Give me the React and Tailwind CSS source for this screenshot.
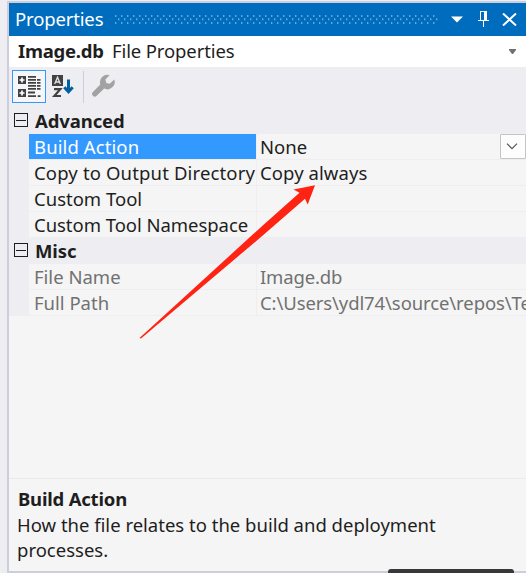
import React from "react";

function Expander() {
  return (
    <svg className="ml-[5px] mt-[5px] block" width="14" height="14" viewBox="0 0 14 14" shapeRendering="crispEdges">
      <path d="M.5.5h13v13H.5zM2 7.5h10" fill="none" stroke="#1e1e1e" />
    </svg>
  );
}

function Category({ name, className }) {
  return (
    <div className={`flex bg-[#eeeef2] ${className}`}>
      <div className="w-5 shrink-0"><Expander /></div>
      <div className="ml-[6px] text-[18.5px] leading-[26px] font-bold tracking-[-0.1px] text-[#1e1e1e]">{name}</div>
    </div>
  );
}

function Row({ name, value, selected, muted, track = "", valueTrack = "" }) {
  return (
    <div className={`flex h-[26px] bg-[#eeeef2] pl-5 leading-[26px] ${muted ? "text-[#717171]" : "text-[#1e1e1e]"}`}>
      <div className={`h-[25px] w-[227px] shrink-0 pl-[5px] ${selected ? "bg-[#3399ff] text-white" : "bg-[#f5f5f5]"}`}>
        <span className={track}>{name}</span>
      </div>
      <div className="ml-px flex h-[25px] min-w-0 grow justify-between overflow-hidden bg-[#f5f5f5] pl-[3px]">
        <span className={valueTrack}>{value}</span>
        {selected && (
          <span className="flex h-[25px] w-[26px] shrink-0 items-center justify-center rounded-[1px] border border-[#c5c5c5] bg-[#fdfdfd]">
            <svg className="-ml-[2px]" width="12" height="7" viewBox="0 0 12 7"><path d="M1 .7l5 5 5-5" fill="none" stroke="#555" strokeWidth="1.2" /></svg>
          </span>
        )}
      </div>
    </div>
  );
}

function TitleBar() {
  return (
    <div className="flex h-[33px] shrink-0 items-center bg-[#006cbe] text-white">
      <span className="-mt-[2px] ml-[6px] w-[100px] shrink-0 text-[18.5px] leading-[33px] tracking-[-0.15px]">Properties</span>
      <svg width="323" height="10" viewBox="0 0 323 10">
        <defs>
          <pattern id="grip" width="6" height="10" patternUnits="userSpaceOnUse">
            <path d="M0 0h1.4v2H0zM0 7h1.4v2H0zM3 3.3h1.4v2H3z" fill="#5da9df" />
          </pattern>
        </defs>
        <rect width="323" height="10" fill="url(#grip)" />
      </svg>
      <svg className="ml-[13px]" width="12" height="7" viewBox="0 0 12 7"><path d="M0 .5h12L6 6.5z" fill="#fff" /></svg>
      <svg className="-mt-px ml-[15px]" width="11" height="16" viewBox="0 0 11 16" shapeRendering="crispEdges">
        <path d="M2 0h7v9h2v1H6v6H5v-6H0V9h2zM3 1v8h3V1z" fill="#fff" fillRule="evenodd" />
      </svg>
      <svg className="ml-[13px]" width="15" height="13" viewBox="0 0 15 13"><path d="M1 .5l13 12M14 .5l-13 12" stroke="#fff" strokeWidth="2" /></svg>
    </div>
  );
}

function Toolbar() {
  return (
    <div className="flex h-[40px] shrink-0 items-start bg-[#eeeef2] pt-[3px]">
      <div className="ml-[3px] flex h-[33px] w-[34px] items-center justify-center border border-[#3399ff] bg-[#f6f6f8]">
        <svg width="24" height="23" viewBox="0 0 24 23">
          <path d="M1 1h8v8H1zM1 14h8v8H1z" fill="#424242" />
          <path d="M5 2.5v5M2.5 5h5M5 15.5v5M2.5 18h5" stroke="#fff" strokeWidth="1.7" />
          <path d="M11 1.8h8M11 4.8h8M11 7.8h8M11 10.8h8M11 13.8h8M20 4.8h3.5M20 7.8h3.5M20 10.8h3.5M20 13.8h3.5M11 17.5h7M11 21.2h8M20.7 21.2h2.8" stroke="#424242" strokeWidth="1.8" />
        </svg>
      </div>
      <svg className="ml-[6px] mt-[5px]" width="23" height="24" viewBox="0 0 23 24">
        <path d="M0 0h11v11H0z" fill="#424242" />
        <path d="M2.7 9L5.5 2.3 8.3 9M3.7 7h3.6" fill="none" stroke="#e3e3e6" strokeWidth="1.3" />
        <path d="M2 14.2h6.3L2.3 21H9" fill="none" stroke="#424242" strokeWidth="2.2" />
        <path d="M16.5 4.5v13M12.3 12.3l4.2 4.5 4.2-4.5" fill="none" stroke="#00609f" strokeWidth="3" />
      </svg>
      <div className="ml-[8px] mt-[1px] h-[32px] w-px bg-[#cccedb]" />
      <svg className="ml-[8px] mt-[4px]" width="23" height="24" viewBox="0 0 23 24">
        <path d="M17.6 1.2A7.4 7.4 0 0 0 8.3 10.5L.9 18.1a2.5 2.5 0 0 0 3.8 3.7l7.5-7.2A7.4 7.4 0 0 0 22.3 5.4l-4.6 4.4-3.4-.7-.9-3.5z" fill="#a2a2a4" />
      </svg>
    </div>
  );
}

export default function App() {
  return (
    <div className="relative h-[573px] w-[526px] overflow-hidden bg-[#eeeef2] pl-[7px] pt-px font-['Noto_Sans','Open_Sans',sans-serif] text-[18.5px] whitespace-nowrap">
      <div className="flex h-[572px] flex-col border-y-2 border-l-2 border-[#cccedb] bg-[#f5f5f5]">
        <TitleBar />
        <div className="flex h-[31px] shrink-0 items-center bg-white text-[#1e1e1e]">
          <span className="-mt-[2px] ml-[9px] w-[94px] font-bold leading-[31px] tracking-[-0.25px]">Image.db</span>
          <span className="-mt-[2px] leading-[31px] tracking-[-0.12px]">File Properties</span>
          <svg className="ml-auto mr-[10px]" width="7" height="5" viewBox="0 0 7 5"><path d="M0 0h7v1L4 5H3L0 1z" fill="#717171" /></svg>
        </div>
        <Toolbar />
        <Category name="Advanced" className="h-[27px] pt-px" />
        <Row name="Build Action" value="None" selected track="tracking-[0.1px]" />
        <Row name="Copy to Output Directory" value="Copy always" track="tracking-[0.15px]" valueTrack="tracking-[0.08px]" />
        <Row name="Custom Tool" value="" />
        <Row name="Custom Tool Namespace" value="" track="tracking-[-0.04px]" />
        <Category name="Misc" className="h-[26px]" />
        <Row name="File Name" value="Image.db" muted valueTrack="tracking-[-0.15px]" />
        <Row name="Full Path" value={"C:\\Users\\ydl74\\source\\repos\\Te"} muted valueTrack="tracking-[-0.1px]" />
        <div className="h-[162px] shrink-0" />
        <div className="grow border-t border-[#eaeaec] pl-[8px] pt-[7px] leading-[25px] text-[#1e1e1e]">
          <div className="mb-px pl-px font-bold tracking-[-0.2px]">Build Action</div>
          <div>How the file relates to the build and deployment</div>
          <div>processes.</div>
        </div>
      </div>
      <svg className="absolute left-0 top-0" width="526" height="573" viewBox="0 0 526 573">
        <path d="M139.5 338L263 225.2 299.5 192.8 293.5 189.5 315 185.3 307.7 204.5 305 198.8 263 235.3 141 338.5z" fill="#ff2313" />
      </svg>
      <div className="absolute left-[388px] top-[569px] h-2 w-[126px] rounded-t-[3px] bg-[#38383b]" />
    </div>
  );
}
